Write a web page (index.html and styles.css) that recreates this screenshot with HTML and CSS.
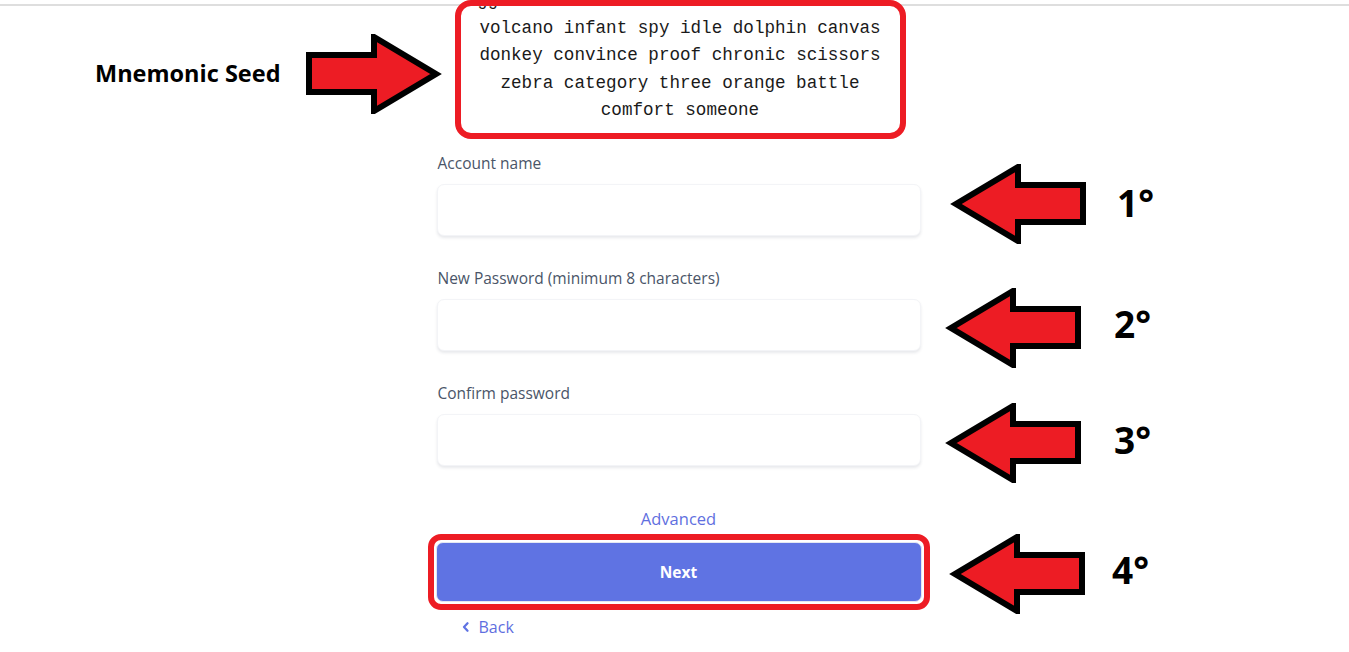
FILE: index.html
```html
<!DOCTYPE html>
<html lang="en">
<head>
<meta charset="utf-8">
<title>Import account</title>
<link rel="stylesheet" href="styles.css">
</head>
<body>
<div class="topline"></div>
<div class="page">
  <main class="form">
    <div class="seed-box">
      <div class="seed-text">
        <p class="seed-line seed-cut">egg</p>
        <p class="seed-line">volcano infant spy idle dolphin canvas</p>
        <p class="seed-line">donkey convince proof chronic scissors</p>
        <p class="seed-line">zebra category three orange battle</p>
        <p class="seed-line">comfort someone</p>
      </div>
    </div>

    <label class="field">
      <span class="label">Account name</span>
      <input class="input" type="text">
    </label>
    <label class="field">
      <span class="label">New Password (minimum 8 characters)</span>
      <input class="input" type="password">
    </label>
    <label class="field">
      <span class="label">Confirm password</span>
      <input class="input" type="password">
    </label>

    <a class="advanced" href="#">Advanced</a>
    <div class="next-mark">
      <button class="next" type="button">Next</button>
    </div>
    <a class="back" href="#">
      <svg class="chev" width="7" height="10" viewBox="0 0 7 10"><path d="M5.5 1.2 L2 5 L5.5 8.8" fill="none" stroke="#5f73e3" stroke-width="2.2" stroke-linecap="round" stroke-linejoin="round"/></svg>
      Back
    </a>
  </main>
</div>

<div class="note note-seed">
  <span class="note-title">Mnemonic Seed</span>
</div>
<svg class="arrow arrow-right" width="136" height="80" viewBox="0 0 136 80"><polygon points="3,21 68,21 68,3 130,40 68,77 68,58 3,58" fill="#ed1c24" stroke="#000" stroke-width="6" stroke-linejoin="miter"/></svg>

<svg class="arrow arrow-l1" width="136" height="80" viewBox="0 0 136 80"><polygon points="133,21 68,21 68,3 6,40 68,77 68,58 133,58" fill="#ed1c24" stroke="#000" stroke-width="6" stroke-linejoin="miter"/></svg>
<span class="num num-1">1°</span>
<svg class="arrow arrow-l2" width="136" height="80" viewBox="0 0 136 80"><polygon points="133,21 68,21 68,3 6,40 68,77 68,58 133,58" fill="#ed1c24" stroke="#000" stroke-width="6" stroke-linejoin="miter"/></svg>
<span class="num num-2">2°</span>
<svg class="arrow arrow-l3" width="136" height="80" viewBox="0 0 136 80"><polygon points="133,21 68,21 68,3 6,40 68,77 68,58 133,58" fill="#ed1c24" stroke="#000" stroke-width="6" stroke-linejoin="miter"/></svg>
<span class="num num-3">3°</span>
<svg class="arrow arrow-l4" width="136" height="80" viewBox="0 0 136 80"><polygon points="133,21 68,21 68,3 6,40 68,77 68,58 133,58" fill="#ed1c24" stroke="#000" stroke-width="6" stroke-linejoin="miter"/></svg>
<span class="num num-4">4°</span>
</body>
</html>
```

FILE: styles.css
```css
* { box-sizing: border-box; }
html, body { margin: 0; padding: 0; background: #fff; }
body {
  position: relative;
  width: 1349px;
  height: 652px;
  overflow: hidden;
  font-family: "Open Sans", "Noto Sans", sans-serif;
  color: #4a5568;
}
.topline {
  height: 6px;
  border-bottom: 2px solid #dedede;
}
.page {
  display: flex;
  justify-content: center;
  padding-left: 8px;
}
.form {
  width: 484px;
  display: flex;
  flex-direction: column;
}
.seed-box {
  position: relative;
  z-index: 2;
  align-self: center;
  width: 451px;
  height: 139px;
  margin-top: -6px;
  margin-left: 3px;
  border: 6px solid #ed1c24;
  border-radius: 16px;
  background: #fff;
  overflow: hidden;
}
.seed-text {
  margin-top: -19px;
  text-align: center;
  font-family: "Liberation Mono", "Courier New", monospace;
  font-size: 17.6px;
  line-height: 27.5px;
  color: #1a1a1a;
}
.seed-line { margin: 0; white-space: nowrap; }
.seed-cut { text-align: left; padding-left: 6px; }

.field {
  display: flex;
  flex-direction: column;
  margin-top: 13px;
}
.field + .field { margin-top: 31px; }
.label {
  font-size: 15.5px;
  line-height: 22px;
  color: #4a5568;
  padding-left: 1px;
}
.input {
  margin-top: 10px;
  height: 52px;
  width: 100%;
  border: 1px solid #f3f4f7;
  border-radius: 7px;
  background: #fff;
  box-shadow: 0 2px 3px rgba(30, 40, 70, 0.10);
  font: inherit;
  outline: none;
}
.advanced {
  align-self: center;
  margin-top: 42px;
  font-size: 16.5px;
  line-height: 22px;
  color: #5f6fe0;
  text-decoration: none;
}
.next-mark {
  margin: 4px -9px 0 -9px;
  padding: 2px;
  border: 6px solid #ed1c24;
  border-radius: 13px;
  background: #fff;
}
.next {
  display: block;
  width: 100%;
  height: 60px;
  border: 1px solid #e4e7f2;
  border-radius: 7px;
  background: #5f73e3;
  color: #fff;
  font-family: "Open Sans", "Noto Sans", sans-serif;
  font-weight: 700;
  font-size: 15.5px;
  cursor: pointer;
}
.back {
  display: flex;
  align-items: center;
  gap: 10px;
  margin-top: 6px;
  margin-left: 25px;
  font-size: 16px;
  line-height: 22px;
  color: #5f6fe0;
  text-decoration: none;
}

/* annotation overlays */
.note {
  position: absolute;
  left: 95px;
  top: 58px;
}
.note-title {
  font-family: "Open Sans", "Noto Sans", sans-serif;
  font-weight: 700;
  font-size: 23.5px;
  line-height: 30px;
  color: #000;
}
.arrow { position: absolute; }
.arrow-right { left: 306px; top: 34px; }
.arrow-l1 { left: 950px; top: 164px; }
.arrow-l2 { left: 945px; top: 288px; }
.arrow-l3 { left: 945px; top: 403px; }
.arrow-l4 { left: 949px; top: 534px; }
.num {
  position: absolute;
  font-family: "Open Sans", "Noto Sans", sans-serif;
  font-weight: 700;
  font-size: 37px;
  line-height: 40px;
  color: #000;
}
.num-1 { left: 1117px; top: 183px; }
.num-2 { left: 1114px; top: 304px; }
.num-3 { left: 1114px; top: 420px; }
.num-4 { left: 1112px; top: 550px; }
```
